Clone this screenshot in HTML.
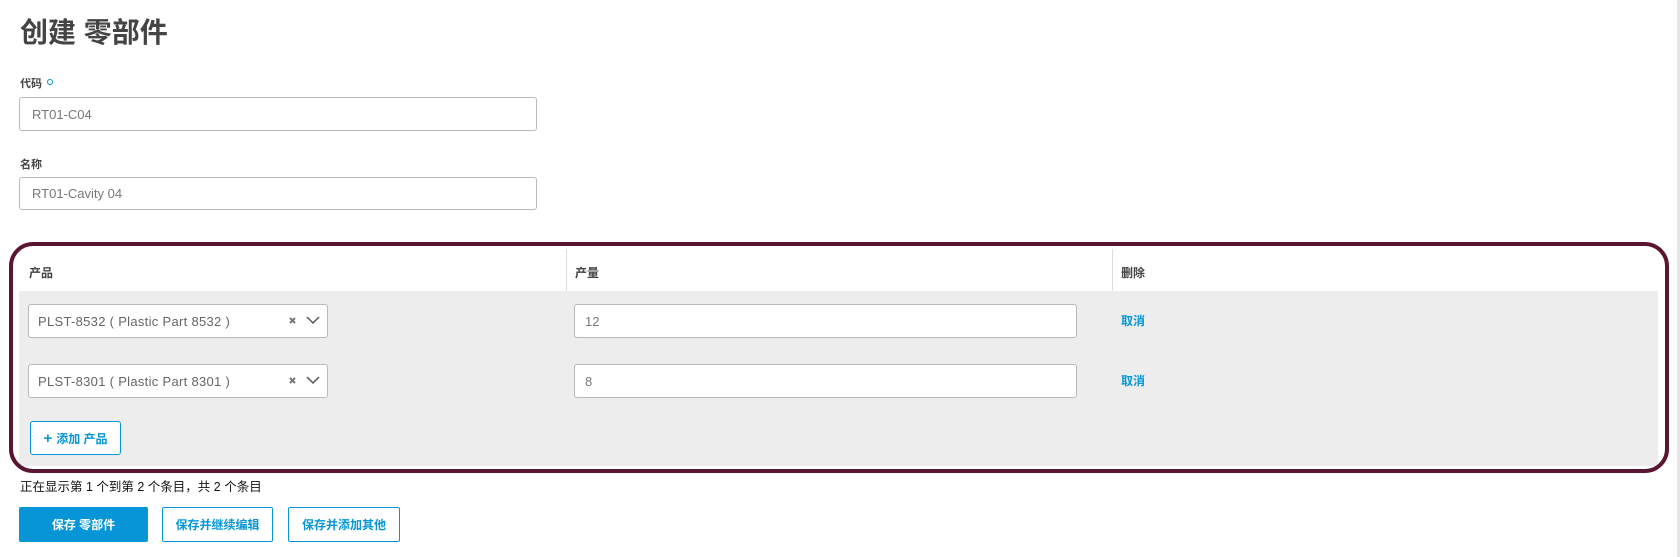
<!DOCTYPE html>
<html><head><meta charset="utf-8"><style>
*{box-sizing:border-box;margin:0;padding:0}
body{width:1680px;height:557px;background:#fff;position:relative;overflow:hidden;font-family:"Liberation Sans","Noto Sans CJK SC",sans-serif;color:#333}
.a{position:absolute}
h1{position:absolute;left:20px;top:11px;font-size:28px;font-weight:bold;color:#444}
.lbl{font-size:11px;font-weight:bold;color:#444}
.inp{border:1px solid #b8b8bd;border-radius:3px;background:#fff;font-size:13px;color:#777;padding-left:12px;display:flex;align-items:center}
.hdr{font-size:12px;font-weight:bold;color:#444}
.link{font-size:12px;font-weight:bold;color:#0696d7}
.btn{border:1px solid #0696d7;border-radius:2px;color:#0696d7;font-size:12px;font-weight:bold;display:flex;align-items:center;justify-content:center;background:#fff}
</style></head><body>
<h1>创建 零部件</h1>
<div class="a lbl" style="left:20px;top:75px">代码 <span style="display:inline-block;width:6px;height:6px;border:1.5px solid #0696d7;border-radius:50%;vertical-align:2px;margin-left:2px"></span></div>
<div class="a inp" style="left:19px;top:97px;width:518px;height:34px">RT01-C04</div>
<div class="a lbl" style="left:20px;top:156px">名称</div>
<div class="a inp" style="left:19px;top:177px;width:518px;height:33px">RT01-Cavity 04</div>

<div class="a" style="left:19px;top:249px;width:1639px;height:42px;background:#fff"></div>
<div class="a" style="left:566px;top:249px;width:1px;height:42px;background:#ddd"></div>
<div class="a" style="left:1112px;top:249px;width:1px;height:42px;background:#ddd"></div>
<div class="a hdr" style="left:29px;top:264px">产品</div>
<div class="a hdr" style="left:575px;top:264px">产量</div>
<div class="a hdr" style="left:1121px;top:264px">删除</div>
<div class="a" style="left:19px;top:291px;width:1639px;height:175px;background:#ededed"></div>

<div class="a inp" style="left:28px;top:304px;width:300px;height:34px;padding-left:9px;color:#666;letter-spacing:.3px">PLST-8532 ( Plastic Part 8532 )</div>
<div class="a inp" style="left:28px;top:364px;width:300px;height:34px;padding-left:9px;color:#666;letter-spacing:.3px">PLST-8301 ( Plastic Part 8301 )</div>
<svg class="a" style="left:289px;top:315px" width="34" height="12"><path d="M1 3l5 5M6 3l-5 5" stroke="#777" stroke-width="2"/><path d="M18 2l6 6 6-6" stroke="#555" stroke-width="1.5" fill="none"/></svg>
<svg class="a" style="left:289px;top:375px" width="34" height="12"><path d="M1 3l5 5M6 3l-5 5" stroke="#777" stroke-width="2"/><path d="M18 2l6 6 6-6" stroke="#555" stroke-width="1.5" fill="none"/></svg>
<div class="a inp" style="left:574px;top:304px;width:503px;height:34px;padding-left:10px">12</div>
<div class="a inp" style="left:574px;top:364px;width:503px;height:34px;padding-left:10px">8</div>
<div class="a link" style="left:1121px;top:312px">取消</div>
<div class="a link" style="left:1121px;top:372px">取消</div>
<div class="a btn" style="left:30px;top:421px;width:91px;height:34px;border-radius:3px"><span style="font-size:15px;margin-right:4px">+</span>添加 产品</div>

<div class="a" style="left:9px;top:242px;width:1660px;height:231px;border:4px solid #5a1530;border-radius:24px"></div>

<div class="a" style="left:20px;top:476px;font-size:12.5px;color:#111">正在显示第 1 个到第 2 个条目，共 2 个条目</div>
<div class="a btn" style="left:19px;top:507px;width:129px;height:35px;background:#0696d7;color:#fff">保存 零部件</div>
<div class="a btn" style="left:162px;top:507px;width:111px;height:35px">保存并继续编辑</div>
<div class="a btn" style="left:288px;top:507px;width:112px;height:35px">保存并添加其他</div>
<div class="a" style="left:1677px;top:0;width:3px;height:557px;background:#e6e6e6"></div>
</body></html>
